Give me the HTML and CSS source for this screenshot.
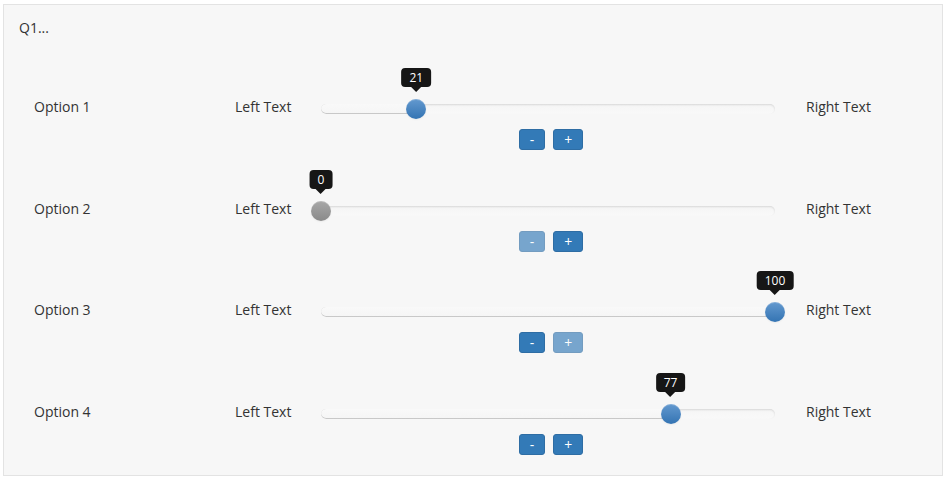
FILE: index.html
```html
<!DOCTYPE html>
<html>
<head>
<meta charset="utf-8">
<link rel="stylesheet" href="styles.css">
</head>
<body>
<div class="panel">
  <div class="title">Q1...</div>
  <div class="rows">
    <div class="row">
      <div class="label">Option 1</div>
      <div class="left">Left Text</div>
      <div class="slider-cell">
        <div class="slider">
          <div class="track">
            <div class="selection" style="width:21%"></div>
          </div>
          <div class="handle" style="left:21%">
            <div class="tip">21</div>
          </div>
        </div>
        <div class="btns">
          <button class="btn">-</button>
          <button class="btn">+</button>
        </div>
      </div>
      <div class="right">Right Text</div>
    </div>
    <div class="row">
      <div class="label">Option 2</div>
      <div class="left">Left Text</div>
      <div class="slider-cell">
        <div class="slider">
          <div class="track">
            <div class="selection" style="width:0%"></div>
          </div>
          <div class="handle grey" style="left:0%">
            <div class="tip">0</div>
          </div>
        </div>
        <div class="btns">
          <button class="btn disabled">-</button>
          <button class="btn">+</button>
        </div>
      </div>
      <div class="right">Right Text</div>
    </div>
    <div class="row">
      <div class="label">Option 3</div>
      <div class="left">Left Text</div>
      <div class="slider-cell">
        <div class="slider">
          <div class="track">
            <div class="selection" style="width:100%"></div>
          </div>
          <div class="handle" style="left:100%">
            <div class="tip">100</div>
          </div>
        </div>
        <div class="btns">
          <button class="btn">-</button>
          <button class="btn disabled">+</button>
        </div>
      </div>
      <div class="right">Right Text</div>
    </div>
    <div class="row">
      <div class="label">Option 4</div>
      <div class="left">Left Text</div>
      <div class="slider-cell">
        <div class="slider">
          <div class="track">
            <div class="selection" style="width:77%"></div>
          </div>
          <div class="handle" style="left:77%">
            <div class="tip">77</div>
          </div>
        </div>
        <div class="btns">
          <button class="btn">-</button>
          <button class="btn">+</button>
        </div>
      </div>
      <div class="right">Right Text</div>
    </div>
  </div>
</div>
</body>
</html>
```

FILE: styles.css
```css
html, body {
  margin: 0;
  padding: 0;
  background: #ffffff;
}

body {
  font-family: "Open Sans", "Liberation Sans", sans-serif;
  font-size: 14px;
  color: #333333;
}

.panel {
  margin: 4px 0 0 3px;
  width: 938px;
  height: 470px;
  background: #f7f7f7;
  border: 1px solid #e3e3e3;
  box-sizing: content-box;
  padding: 0;
  overflow: hidden;
}

.title {
  padding: 13px 0 0 15px;
  line-height: 20px;
  height: 20px;
  margin-bottom: 19px;
}

.rows {
  display: grid;
  grid-auto-rows: 101.67px;
}

.row {
  display: grid;
  grid-template-columns: 201px 86px 454px 1fr;
  align-items: start;
  padding: 40px 0 0 30px;
  box-sizing: border-box;
}

.label, .left, .right {
  line-height: 20px;
}

.right {
  padding-left: 31px;
}

.slider-cell {
  display: flex;
  flex-direction: column;
  padding-top: 2px;
}

.slider {
  position: relative;
  height: 20px;
}

.track {
  position: absolute;
  left: 0;
  right: 0;
  top: 5px;
  height: 10px;
  border-radius: 5px;
  background: linear-gradient(#f5f5f5, #f9f9f9);
  box-shadow: inset 0 1px 2px rgba(0, 0, 0, 0.12);
  overflow: hidden;
}

.selection {
  height: 100%;
  background: linear-gradient(#f9f9f9, #f5f5f5);
  box-shadow: inset 0 -1px 0 rgba(0, 0, 0, 0.18);
  border-radius: 5px 0 0 5px;
}

.handle {
  position: absolute;
  top: 0;
  width: 20px;
  height: 20px;
  margin-left: -10px;
  border-radius: 50%;
  background: linear-gradient(#6399cf, #3474b3);
  box-shadow: inset 0 1px 0 rgba(255, 255, 255, 0.2), 0 1px 2px rgba(0, 0, 0, 0.05);
}

.handle.grey {
  background: linear-gradient(#a8a8a8, #8a8a8a);
}

.tip {
  position: absolute;
  bottom: 32px;
  left: 50%;
  transform: translateX(-50%);
  background: #161616;
  color: #ffffff;
  font-size: 12px;
  line-height: 19px;
  height: 19px;
  padding: 0 8px;
  border-radius: 4px;
  white-space: nowrap;
}

.tip::after {
  content: "";
  position: absolute;
  left: 50%;
  top: 100%;
  margin-left: -5px;
  border-style: solid;
  border-width: 5px 5px 0 5px;
  border-color: #161616 transparent transparent transparent;
}

.btns {
  display: flex;
  justify-content: center;
  gap: 8px;
  margin-top: 10px;
  padding-left: 6px;
}

.btn {
  font-family: "Open Sans", "Liberation Sans", sans-serif;
  font-size: 14px;
  line-height: 19px;
  height: 21px;
  padding: 0 10px;
  color: #ffffff;
  background: #337ab7;
  border: 1px solid #2e6da4;
  border-radius: 3px;
  margin: 0;
}

.btn.disabled {
  opacity: 0.65;
}
```
